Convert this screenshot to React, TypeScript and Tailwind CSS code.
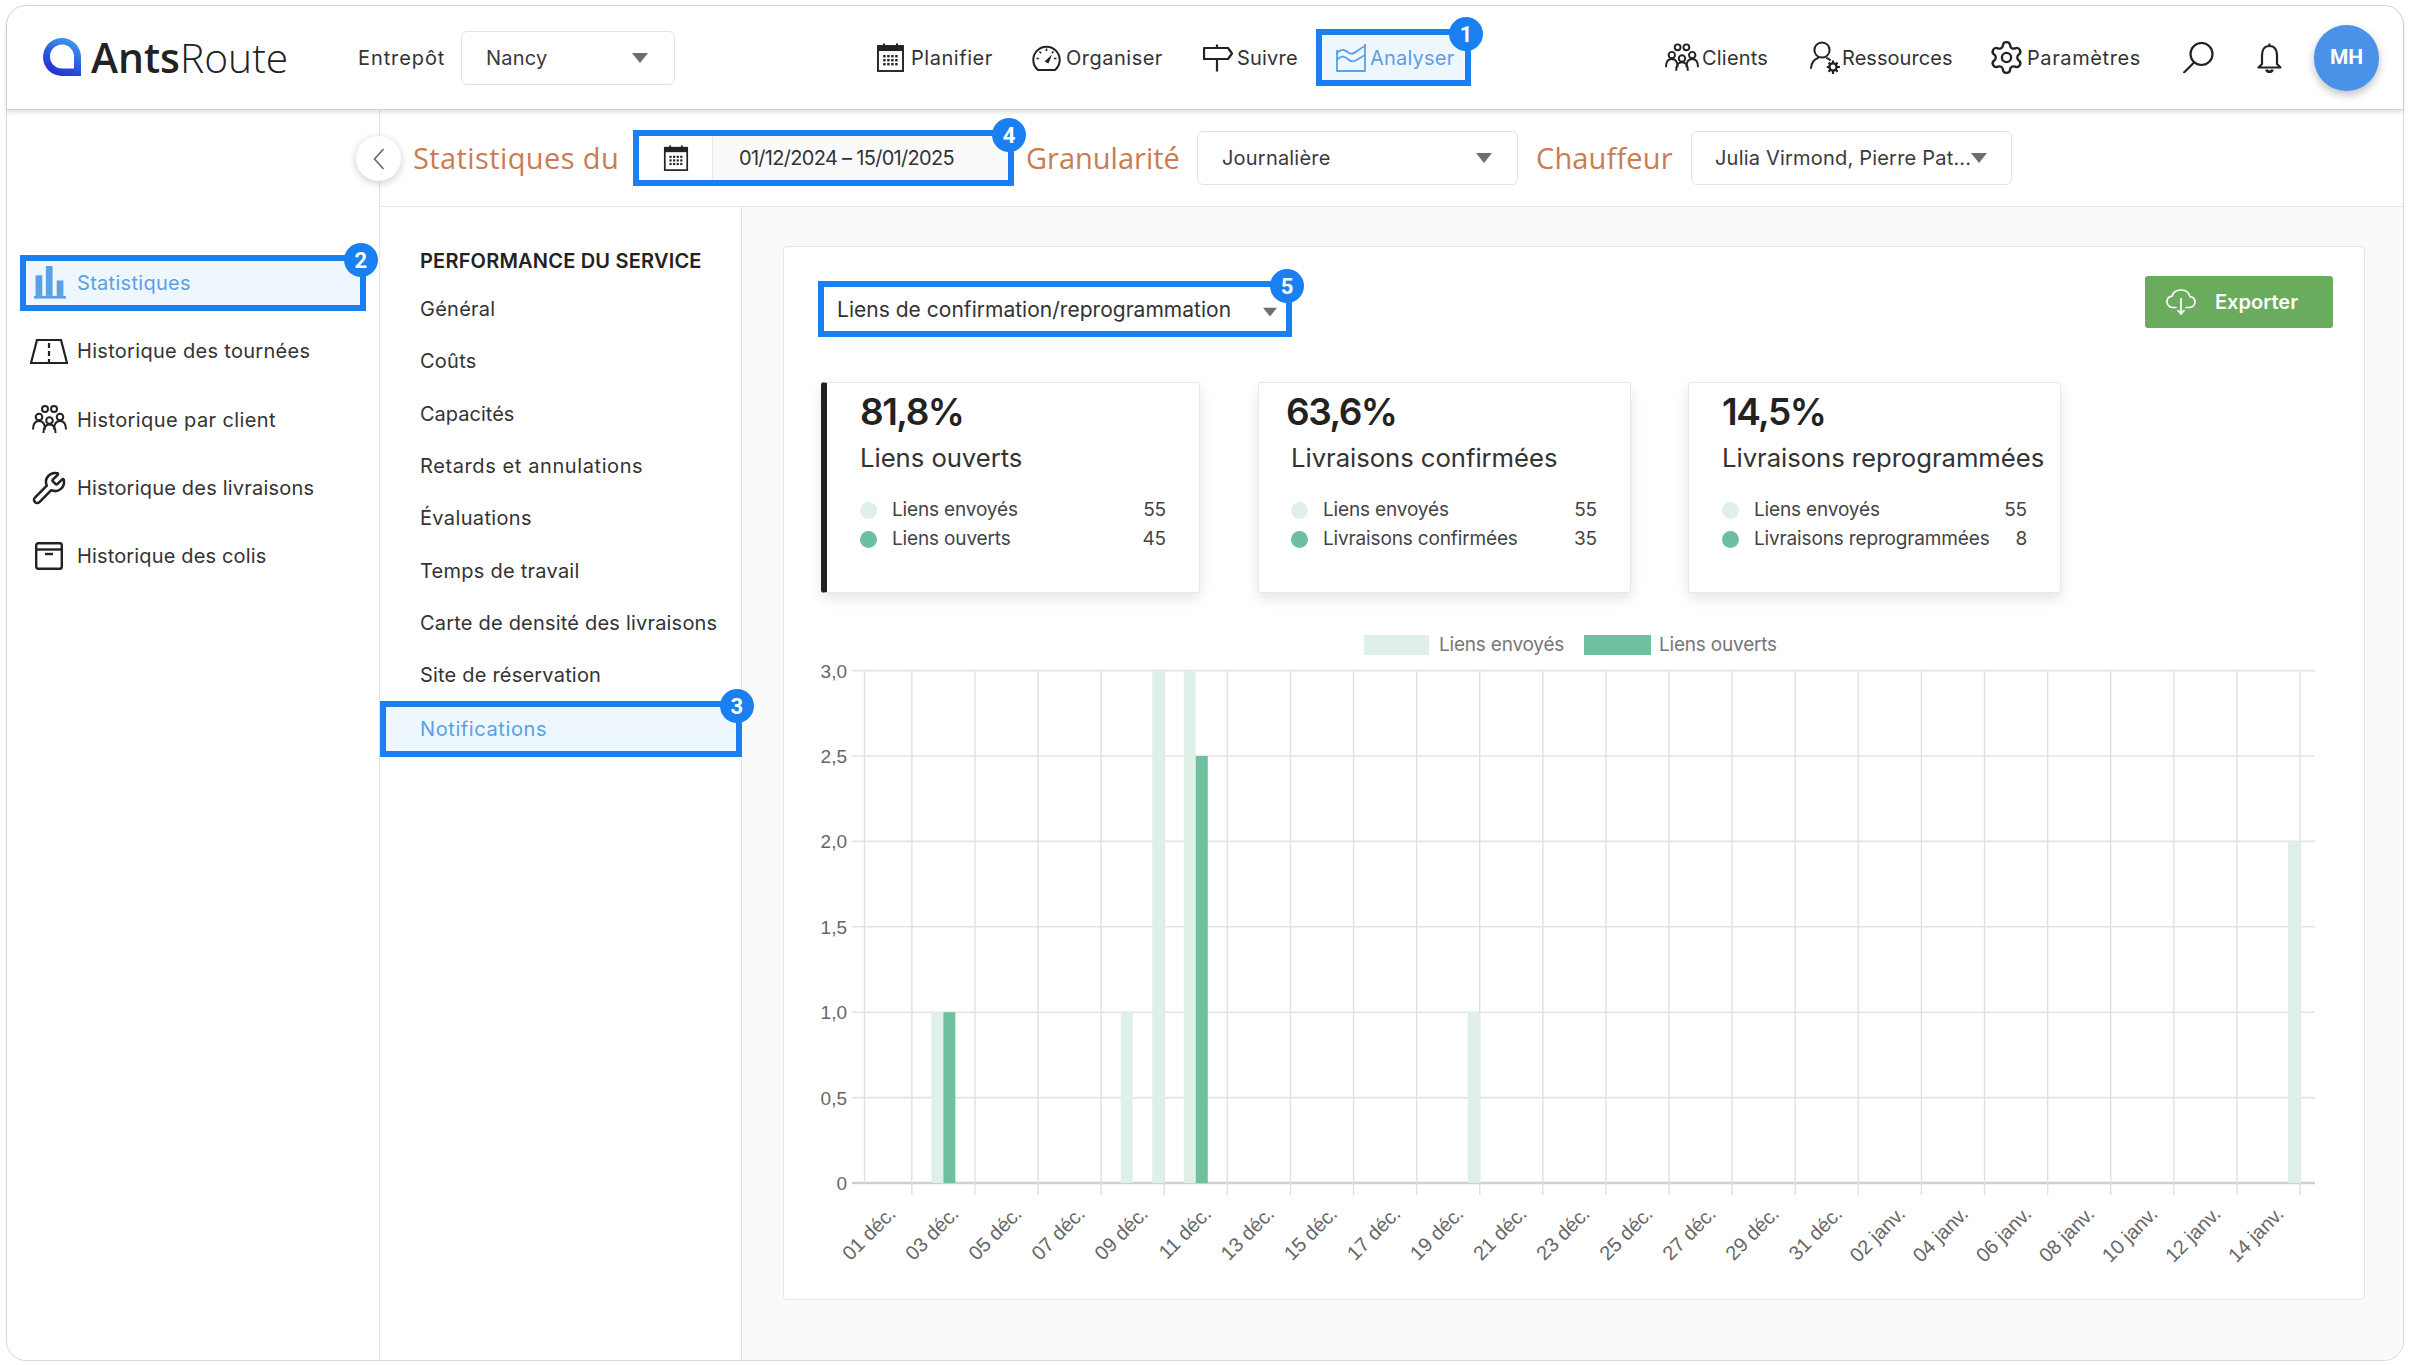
import React from "react";
import { Settings, Wrench } from "lucide-react";

const INK = "#222222";

function Caret({ className = "" }: { className?: string }) {
  return (
    <svg width="16" height="10" viewBox="0 0 16 10" className={"shrink-0 " + className}>
      <polygon points="0,0 16,0 8,10" fill="#6e6e6e" />
    </svg>
  );
}

function Badge({ n }: { n: number }) {
  return (
    <span className="absolute -right-[18px] -top-[18px] z-20 flex h-[34px] w-[34px] items-center justify-center rounded-full bg-[#1a7ff0] text-[22px] font-bold text-white [font-family:Roboto,sans-serif]">
      {n}
    </span>
  );
}

function CalendarIcon({ w = 27, h = 29 }: { w?: number; h?: number }) {
  const dots: React.ReactNode[] = [];
  for (let r = 0; r < 3; r++)
    for (let c = 0; c < 4; c++)
      dots.push(<rect key={r + "-" + c} x={6.2 + c * 4} y={12 + r * 4} width="2.4" height="2.4" fill={INK} />);
  return (
    <svg width={w} height={h} viewBox="0 0 27 29" className="shrink-0">
      <rect x="1" y="3" width="25" height="25" fill="none" stroke={INK} strokeWidth="1.9" />
      <rect x="1" y="3" width="25" height="5" fill={INK} />
      <rect x="6" y="0.5" width="2" height="4" fill={INK} />
      <rect x="19" y="0.5" width="2" height="4" fill={INK} />
      {dots}
    </svg>
  );
}

function GaugeIcon() {
  return (
    <svg width="29" height="27" viewBox="0 0 29 27" className="shrink-0">
      <path d="M6 26 A13.2 13.2 0 1 1 23 26 Z" fill="none" stroke={INK} strokeWidth="2" strokeLinejoin="round" />
      <path d="M14.5 4.5v2.5M7.5 7.5l1.6 1.7M4.5 14.5H7M21.5 7.5l-1.6 1.7M24.5 14.5H22" stroke={INK} strokeWidth="1.6" />
      <path d="M12.5 17.5 L20 10.5 L16.5 19.5 Z" fill={INK} />
    </svg>
  );
}

function SignIcon() {
  return (
    <svg width="30" height="28" viewBox="0 0 30 28" className="shrink-0">
      <path d="M14 0.5V4M14 15V27.5" stroke={INK} strokeWidth="2.2" fill="none" />
      <path d="M1 4H25L29 9.5L25 15H1Z" fill="none" stroke={INK} strokeWidth="2.2" strokeLinejoin="round" />
    </svg>
  );
}

function AreaIcon() {
  return (
    <svg width="30" height="29" viewBox="0 0 30 29" className="shrink-0">
      <g fill="none" stroke="#5b9fe6" strokeWidth="1.8" strokeLinejoin="round">
        <path d="M1 7V28H29V1" />
        <path d="M1 10C6 5 9 7 13 10C18 13 22 6 29 3" />
        <path d="M1 17C5 12 9 13 13 17C18 21 23 15 29 12" />
      </g>
    </svg>
  );
}

function GroupIcon({ w = 34, h = 30 }: { w?: number; h?: number }) {
  const person = (cx: number, cy: number, key: string) => (
    <g key={key}>
      <circle cx={cx} cy={cy} r="3.3" />
      <path d={`M${cx - 6} ${cy + 12.5}C${cx - 6} ${cy + 7} ${cx - 3.5} ${cy + 4} ${cx} ${cy + 4}C${cx + 3.5} ${cy + 4} ${cx + 6} ${cy + 7} ${cx + 6} ${cy + 12.5}`} />
    </g>
  );
  return (
    <svg width={w} height={h} viewBox="0 0 35 30" className="shrink-0" fill="none" stroke={INK} strokeWidth="2">
      <circle cx="13" cy="4" r="3" />
      <circle cx="22" cy="4" r="3" />
      {person(7, 12, "a")}
      {person(28, 12, "b")}
      {person(17.5, 15.5, "c")}
    </svg>
  );
}

function ResourceIcon() {
  return (
    <svg width="31" height="34" viewBox="0 0 31 34" className="shrink-0" fill="none" stroke={INK} strokeWidth="2">
      <circle cx="12" cy="9" r="7.6" />
      <path d="M1 27C1.5 22 4 18.5 8 17M17 17.2C18 17.7 19 18.3 20 19" strokeLinecap="round" />
      <circle cx="23" cy="26" r="3.6" strokeWidth="2.4" />
      <path d="M23 19.5v2.6M23 30v3M16.8 26h2.6M27 26h3M18.6 21.6l1.8 1.8M25.8 28.8l1.9 1.9M27.6 21.6l-1.8 1.8M20.4 28.8l-1.9 1.9" strokeWidth="2.2" />
    </svg>
  );
}

function SearchIcon() {
  return (
    <svg width="31" height="31" viewBox="0 0 31 31" className="shrink-0" fill="none" stroke="#222" strokeWidth="2.2">
      <circle cx="18.5" cy="12" r="11" />
      <path d="M11 20.5L1 30.5" strokeLinecap="round" />
    </svg>
  );
}

function BellIcon() {
  return (
    <svg width="25" height="32" viewBox="0 0 25 32" className="shrink-0" fill="none" stroke="#222" strokeWidth="2.2">
      <path d="M12.5 1.5V4M12.5 4C7 4 5 8.5 5 13V22L1.5 25.5H23.5L20 22V13C20 8.5 18 4 12.5 4Z" strokeLinejoin="round" />
      <path d="M9.5 27.5C10 30.5 15 30.5 15.5 27.5" strokeWidth="2.6" />
    </svg>
  );
}

function BarsIcon() {
  return (
    <svg width="32" height="33" viewBox="0 0 31 32" className="shrink-0" fill="#5b9fe6">
      <rect x="1.5" y="9" width="6.5" height="20" />
      <rect x="11.5" y="0" width="6.5" height="29" />
      <rect x="22" y="14" width="6.5" height="15" />
      <rect x="0" y="29" width="31" height="2.6" />
    </svg>
  );
}

function RoadIcon() {
  return (
    <svg width="38" height="25" viewBox="0 0 38 25" className="shrink-0" fill="none" stroke={INK} strokeWidth="2.2">
      <path d="M7 1H31L37 24H1Z" strokeLinejoin="miter" />
      <path d="M19 4V9M19 12V17M19 20V24" />
    </svg>
  );
}

function BoxIcon() {
  return (
    <svg width="28" height="28" viewBox="0 0 28 28" className="shrink-0" fill="none" stroke={INK} strokeWidth="2.4">
      <rect x="1.2" y="1.2" width="25.6" height="25.6" rx="2" />
      <path d="M1.2 7.5H26.8" />
      <path d="M10 12H18" />
    </svg>
  );
}

function CloudIcon() {
  return (
    <svg width="30" height="26" viewBox="0 0 30 26" className="shrink-0" fill="none" stroke="#fff" strokeWidth="1.7">
      <path d="M10 18.5H7C3.5 18.5 1 16 1 12.8C1 10 3 7.6 6 7.2C7 3.4 10.5 1 15 1C19.5 1 23 3.8 24 7.6C27 8 29 10 29 12.8C29 16 26.5 18.5 23 18.5H20" strokeLinecap="round" />
      <path d="M15 9V24M11.5 21L15 25L18.5 21" />
    </svg>
  );
}

function Select({ text, width, pl = "pl-[24px]", pr = "pr-[26px]", h = "h-[54px]" }: { text: string; width: string; pl?: string; pr?: string; h?: string }) {
  return (
    <div className={`flex ${width} ${h} ${pl} ${pr} shrink-0 items-center justify-between whitespace-nowrap rounded-[6px] border border-[#e2e2e2] bg-white text-[20px] tracking-[0.2px] text-[#3a3a3a]`}>
      <span>{text}</span>
      <Caret />
    </div>
  );
}

function NavItem({ icon, label, width, gap, ml, tracking = "tracking-[0.2px]" }: { icon: React.ReactNode; label: string; width: string; gap: string; ml: string; tracking?: string }) {
  return (
    <div className={`flex items-center ${gap} ${ml}`}>
      {icon}
      <span className={`${width} ${tracking} whitespace-nowrap text-[20px] text-[#333]`}>{label}</span>
    </div>
  );
}

function Orange({ text, width, tracking = "" }: { text: string; width: string; tracking?: string }) {
  return <span className={`${width} ${tracking} shrink-0 whitespace-nowrap text-[29px] text-[#c97c52] [font-family:'Open_Sans',sans-serif]`}>{text}</span>;
}

const sideItems: { label: string; icon: React.ReactNode; x: string }[] = [
  { label: "Historique des tournées", icon: <RoadIcon />, x: "pl-[23px] gap-[9px]" },
  { label: "Historique par client", icon: <GroupIcon w={35} h={30} />, x: "pl-[25px] gap-[10px] tracking-[0.4px]" },
  { label: "Historique des livraisons", icon: <Wrench size={36} strokeWidth={1.7} color={INK} className="shrink-0" />, x: "pl-[24px] gap-[10px] tracking-[0.2px]" },
  { label: "Historique des colis", icon: <BoxIcon />, x: "pl-[28px] gap-[14px] tracking-[0.15px]" },
];

const subItems: [string, string][] = [
  ["Général", ""],
  ["Coûts", ""],
  ["Capacités", "tracking-[0px]"],
  ["Retards et annulations", "tracking-[0.6px]"],
  ["Évaluations", "tracking-[0.35px]"],
  ["Temps de travail", ""],
  ["Carte de densité des livraisons", "tracking-[0.2px]"],
  ["Site de réservation", "tracking-[0.2px]"],
];

type StatProps = {
  value: string;
  title: string;
  rows: [string, string][];
  className: string;
  bodyMl?: string;
};

function StatCard({ value, title, rows, className, bodyMl = "" }: StatProps) {
  return (
    <div className={`relative h-[211px] shrink-0 rounded-[3px] border border-[#e8e8e8] bg-white pt-[7px] shadow-[0_6px_14px_rgba(0,0,0,0.1)] ${className}`}>
      <div className="h-[44px] text-[37px] leading-[44px] font-semibold tracking-[-1.5px] text-[#222]">{value}</div>
      <div className={`mt-[6px] h-[36px] whitespace-nowrap text-[25.7px] leading-[36px] tracking-[-0.05px] text-[#333] ${bodyMl}`}>{title}</div>
      <div className={`mt-[20px] ${bodyMl}`}>
        {rows.map(([label, val], i) => (
          <div key={label} className="flex h-[29px] items-center text-[19px] tracking-[-0.15px] text-[#444]">
            <span className={`mr-[15px] h-[17px] w-[17px] rounded-full ${i === 0 ? "bg-[#dff0ea]" : "bg-[#6cc0a0]"}`} />
            <span className="flex-1 whitespace-nowrap">{label}</span>
            <span>{val}</span>
          </div>
        ))}
      </div>
    </div>
  );
}

function Chart() {
  const X0 = 46.5; // 864.5 - 818
  const DAY = 31.55;
  const Y0 = 523; // baseline
  const UNIT = 170.8;
  const ticks = Array.from({ length: 23 }, (_, i) => X0 + DAY * (1.5 + i * 2));
  const labels = [
    ...["01", "03", "05", "07", "09", "11", "13", "15", "17", "19", "21", "23", "25", "27", "29", "31"].map((d) => d + " déc."),
    ...["02", "04", "06", "08", "10", "12", "14"].map((d) => d + " janv."),
  ];
  const yLabels: [number, string][] = [[0, "0"], [0.5, "0,5"], [1, "1,0"], [1.5, "1,5"], [2, "2,0"], [2.5, "2,5"], [3, "3,0"]];
  const bars: [number, number, number][] = [[2, 1, 1], [8, 1, 0], [9, 3, 0], [10, 3, 2.5], [19, 1, 0], [45, 2, 0]];
  return (
    <svg width="1514" height="630" viewBox="0 0 1514 630" className="mt-[5px] block [font-family:'Liberation_Sans',Arial,sans-serif]">
      {yLabels.map(([v, t]) => {
        const y = Y0 - v * UNIT;
        return (
          <g key={t}>
            <line x1="34" x2="1497" y1={y} y2={y} stroke={v === 0 ? "#cfcfcf" : "#e4e4e4"} strokeWidth={v === 0 ? 2.4 : 1.6} />
            <text x="29" y={y + 7} textAnchor="end" className="fill-[#666] text-[19px]">{t}</text>
          </g>
        );
      })}
      <line x1={X0} x2={X0} y1={Y0 - 3 * UNIT} y2={Y0} stroke="#e0e0e0" strokeWidth="1.4" />
      {ticks.map((x) => (
        <line key={x} x1={x} x2={x} y1={Y0 - 3 * UNIT} y2={Y0 + 12} stroke="#e0e0e0" strokeWidth="1.4" />
      ))}
      {bars.map(([d, a, b]) => {
        const c = X0 + DAY * (d + 0.5);
        return (
          <g key={d}>
            <rect x={c - 12} y={Y0 - a * UNIT} width="12" height={a * UNIT} fill="#dff0e9" />
            {b > 0 && <rect x={c} y={Y0 - b * UNIT} width="12" height={b * UNIT} fill="#6dc19f" />}
          </g>
        );
      })}
      {ticks.map((x, i) => (
        <text key={labels[i]} x={x - 15} y={Y0 + 32} textAnchor="end" transform={`rotate(-45 ${x - 15} ${Y0 + 32})`} className="fill-[#666] text-[20px]">
          {labels[i]}
        </text>
      ))}
    </svg>
  );
}

export default function App() {
  return (
    <div className="h-[1365px] w-full bg-white pt-[5px] pr-[6px] pb-[4px] pl-[6px] [font-family:Inter,sans-serif]">
      <div className="relative flex h-full flex-col rounded-[20px] border border-[#d9d9d9]">
        {/* top bar */}
        <header className="relative z-10 flex h-[104px] shrink-0 items-center rounded-t-[20px] border-b border-[#d4d4d4] bg-white shadow-[0_2px_5px_rgba(0,0,0,0.14)]">
          <div className="ml-[36px] flex w-[244px] items-center gap-[10px]">
            <svg width="38" height="38" viewBox="0 0 38 38" className="shrink-0">
              <defs>
                <linearGradient id="lg" x1="0.7" y1="0" x2="0.2" y2="1">
                  <stop offset="0" stopColor="#3f9bec" />
                  <stop offset="0.6" stopColor="#2a4fdc" />
                  <stop offset="1" stopColor="#2a2bc6" />
                </linearGradient>
              </defs>
              <path fillRule="evenodd" fill="url(#lg)" d="M38 38H19A19 19 0 1 1 38 19ZM19 6.5A12 12 0 1 0 19 30.5H31V19A12 12 0 0 0 19 6.5Z" />
            </svg>
            <span className="whitespace-nowrap text-[40.8px] leading-none text-[#222] [font-family:'Open_Sans',sans-serif]">
              <span className="font-semibold">Ants</span>
              <span className="font-light">Route</span>
            </span>
          </div>
          <span className="ml-[71px] w-[88px] whitespace-nowrap text-[20px] tracking-[0.9px] text-[#333]">Entrepôt</span>
          <div className="ml-[15px]">
            <Select text="Nancy" width="w-[214px]" />
          </div>
          <NavItem ml="ml-[202px]" gap="gap-[7px]" width="w-[81px]" tracking="tracking-[0.55px]" label="Planifier" icon={<CalendarIcon />} />
          <NavItem ml="ml-[40px]" gap="gap-[5px]" width="w-[96px]" tracking="tracking-[0.5px]" label="Organiser" icon={<GaugeIcon />} />
          <NavItem ml="ml-[41px]" gap="gap-[4px]" width="w-[60px]" label="Suivre" icon={<SignIcon />} />
          <div className="relative ml-[19px] flex h-[57px] w-[155px] shrink-0 items-center gap-[4px] border-[6px] border-[#1a7ff0] bg-[#eff7fe] pl-[14px]">
            <AreaIcon />
            <span className="whitespace-nowrap text-[20px] tracking-[0.2px] text-[#5b9fe6]">Analyser</span>
            <Badge n={1} />
          </div>
          <NavItem ml="ml-[194px]" gap="gap-[3px]" width="w-[66px]" label="Clients" icon={<GroupIcon />} />
          <NavItem ml="ml-[42px]" gap="gap-[1px]" width="w-[110px]" tracking="tracking-[0.05px]" label="Ressources" icon={<ResourceIcon />} />
          <NavItem ml="ml-[39px]" gap="gap-[5px]" width="w-[113px]" tracking="tracking-[0.6px]" label="Paramètres" icon={<Settings size={37} strokeWidth={1.5} color={INK} className="-m-[3px] shrink-0" />} />
          <div className="ml-[43px]">
            <SearchIcon />
          </div>
          <div className="ml-[43px]">
            <BellIcon />
          </div>
          <div className="ml-[32px] flex h-[66px] w-[65px] shrink-0 items-center justify-center rounded-full bg-[#4a91e8] text-[21px] font-bold text-white shadow-[0_4px_8px_rgba(0,0,0,0.25)] [font-family:Roboto,sans-serif]">
            MH
          </div>
        </header>

        <div className="flex min-h-0 flex-1">
          {/* left sidebar */}
          <aside className="w-[373px] shrink-0 rounded-bl-[20px] border-r border-[#e3e3e3] bg-white pt-[145px] text-[20px] tracking-[0.3px] text-[#333]">
            <div className="relative ml-[13px] flex h-[56px] w-[346px] items-center gap-[11px] border-[6px] border-[#1a7ff0] bg-[#eff7fe] pb-[1px] pl-[8px] text-[#5b9fe6]">
              <BarsIcon />
              <span>Statistiques</span>
              <Badge n={2} />
            </div>
            <div className="mt-[6px]">
              {sideItems.map((it) => (
                <div key={it.label} className={`flex h-[68.4px] items-center ${it.x}`}>
                  {it.icon}
                  <span className="whitespace-nowrap">{it.label}</span>
                </div>
              ))}
            </div>
          </aside>

          <div className="relative flex min-w-0 flex-1 flex-col">
            <button className="absolute -left-[24px] top-[26px] z-10 flex h-[45px] w-[45px] items-center justify-center rounded-full bg-white shadow-[0_2px_8px_rgba(0,0,0,0.2)]">
              <svg width="12" height="22" viewBox="0 0 12 22" fill="none" stroke="#666" strokeWidth="1.6">
                <path d="M10.5 1L1.5 11L10.5 21" />
              </svg>
            </button>
            {/* filter bar */}
            <div className="flex h-[97px] shrink-0 items-center border-b border-[#e3e3e3] bg-white pl-[33px]">
              <Orange text="Statistiques du" width="w-[204px]" tracking="tracking-[0.4px]" />
              <div className="relative ml-[16px] flex h-[56px] w-[381px] shrink-0 border-[6px] border-[#1a7ff0] bg-white">
                <div className="flex w-[74px] shrink-0 items-center justify-center border-r border-[#ececec]">
                  <CalendarIcon w={26} h={26} />
                </div>
                <div className="flex flex-1 items-center bg-[#fafafa] pl-[26px] text-[20px] tracking-[-0.7px] whitespace-nowrap text-[#333]">01/12/2024 – 15/01/2025</div>
                <Badge n={4} />
              </div>
              <div className="ml-[12px]">
                <Orange text="Granularité" width="block w-[154px]" />
              </div>
              <div className="ml-[17px]">
                <Select text="Journalière" width="w-[321px]" pr="pr-[25px]" />
              </div>
              <div className="ml-[18px]">
                <Orange text="Chauffeur" width="block w-[137px]" tracking="tracking-[0.15px]" />
              </div>
              <div className="ml-[18px]">
                <Select text="Julia Virmond, Pierre Pat..." width="w-[321px]" pl="pl-[23px]" pr="pr-[25px]" />
              </div>
            </div>

            <div className="flex min-h-0 flex-1">
              {/* second sidebar */}
              <nav className="w-[362px] shrink-0 border-r border-[#e3e3e3] bg-white pt-[40px] text-[20px] tracking-[0.25px] text-[#333]">
                <div className="flex h-[28px] items-center pl-[40px] font-semibold tracking-[0.2px] text-[#222] whitespace-nowrap">PERFORMANCE DU SERVICE</div>
                <div className="mt-[8px]">
                  {subItems.map(([s, t]) => (
                    <div key={s} className={`flex h-[52.3px] items-center pl-[40px] whitespace-nowrap ${t}`}>
                      {s}
                    </div>
                  ))}
                </div>
                <div className="relative flex h-[56px] w-[362px] items-center border-[6px] border-[#1a7ff0] bg-[#eff7fe] pb-[1px] pl-[34px] tracking-[0.6px] text-[#5b9fe6]">
                  Notifications
                  <Badge n={3} />
                </div>
              </nav>

              {/* content */}
              <main className="min-w-0 flex-1 rounded-br-[20px] bg-[#fafafa] pt-[39px] pr-[38px] pl-[41px]">
                <section className="h-[1054px] rounded-[4px] border border-[#e6e6e6] bg-white pt-[34px] pr-[31px] pl-[34px]">
                  <div className="flex items-start justify-between">
                    <div className="relative flex h-[56px] w-[474px] items-center justify-between border-[6px] border-[#1a7ff0] pt-[2px] pr-[8px] pl-[13px] text-[21px] tracking-[0.02px] whitespace-nowrap text-[#333]">
                      <span>Liens de confirmation/reprogrammation</span>
                      <Caret className="mt-[4px] scale-90" />
                      <Badge n={5} />
                    </div>
                    <button className="-mt-[5px] flex h-[52px] w-[188px] items-center gap-[19px] rounded-[3px] bg-[#6aab5e] pl-[21px] text-[20px] font-semibold text-white">
                      <CloudIcon />
                      Exporter
                    </button>
                  </div>

                  <div className="mt-[45px] ml-[3px] flex gap-[58px]">
                    <StatCard
                      className="w-[379px] border-l-[6px] border-l-[#1f2024] pr-[33px] pl-[33px]"
                      value="81,8%"
                      title="Liens ouverts"
                      rows={[["Liens envoyés", "55"], ["Liens ouverts", "45"]]}
                    />
                    <StatCard
                      className="w-[373px] pr-[33px] pl-[27px]"
                      bodyMl="ml-[5px]"
                      value="63,6%"
                      title="Livraisons confirmées"
                      rows={[["Liens envoyés", "55"], ["Livraisons confirmées", "35"]]}
                    />
                    <StatCard
                      className="-ml-[1px] w-[373px] pr-[33px] pl-[33px]"
                      value="14,5%"
                      title="Livraisons reprogrammées"
                      rows={[["Liens envoyés", "55"], ["Livraisons reprogrammées", "8"]]}
                    />
                  </div>

                  <div className="mt-[42px] ml-[546px] flex h-[20px] items-center text-[19px] tracking-[-0.2px] text-[#777]">
                    <span className="mr-[10px] h-[20px] w-[65px] bg-[#dff0e9]" />
                    <span className="w-[145px] whitespace-nowrap">Liens envoyés</span>
                    <span className="mr-[8px] h-[20px] w-[67px] bg-[#6dc19f]" />
                    <span className="whitespace-nowrap">Liens ouverts</span>
                  </div>

                  <Chart />
                </section>
              </main>
            </div>
          </div>
        </div>
      </div>
    </div>
  );
}
